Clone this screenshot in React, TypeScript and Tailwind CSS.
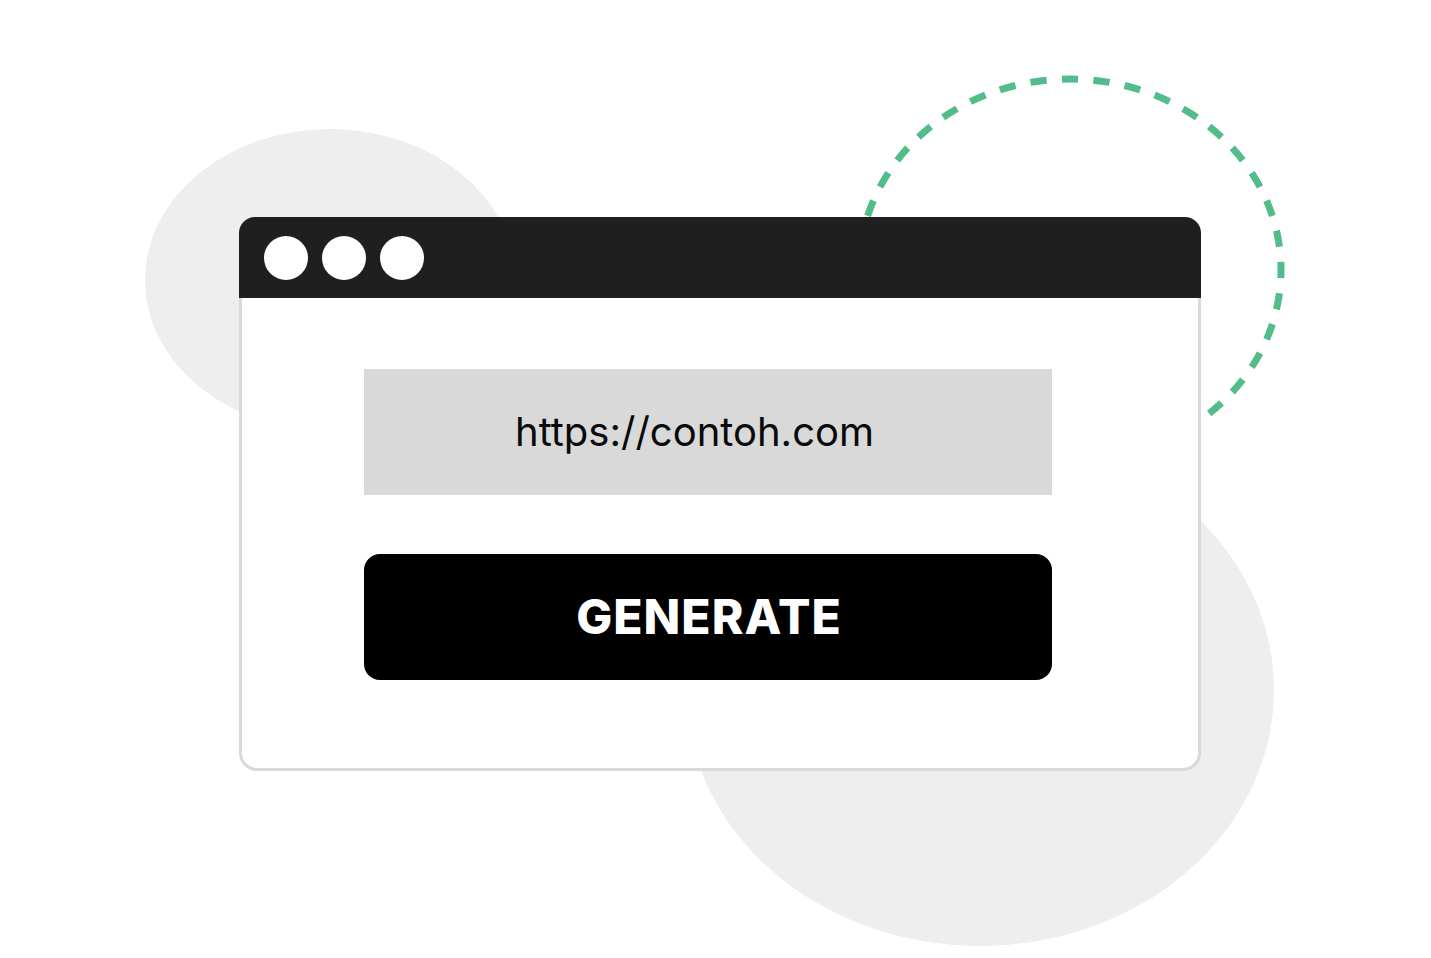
import React from "react";

function Backdrop() {
  return (
    <svg
      className="absolute inset-0 pointer-events-none"
      width="1431"
      height="958"
      viewBox="0 0 1431 958"
    >
      <ellipse cx="330" cy="280" rx="185" ry="151" fill="#efeeef" />
      <ellipse cx="980" cy="690" rx="294" ry="256" fill="#efeeef" />
      <ellipse
        cx="1070"
        cy="270"
        rx="211"
        ry="191"
        fill="none"
        stroke="#52bd8b"
        strokeWidth="7"
        pathLength={1240}
        strokeDasharray="16 15"
        strokeDashoffset="8"
      />
    </svg>
  );
}

export default function App() {
  return (
    <div
      className="relative w-[1431px] h-[958px] bg-white overflow-hidden"
      style={{ fontFamily: "Inter, 'Noto Sans', sans-serif" }}
    >
      <Backdrop />
      <div className="relative pt-[217px] pl-[239px]">
        <div className="w-[962px] flex flex-col">
          <div className="h-[81px] bg-[#1f1f1f] rounded-t-[16px] flex items-center pl-[25px] gap-[14px]">
            <span className="w-[44px] h-[44px] rounded-full bg-white" />
            <span className="w-[44px] h-[44px] rounded-full bg-white" />
            <span className="w-[44px] h-[44px] rounded-full bg-white" />
          </div>
          <div className="h-[473px] bg-white border-[3px] border-t-0 border-[#d9d9d9] rounded-b-[18px] pt-[71px] pl-[122px] flex flex-col gap-[59px]">
            <div className="w-[688px] h-[126px] bg-[#d9d9d9] flex items-center pl-[151px] text-[40px] text-[#0a0a0a] font-normal leading-none">
              https://contoh.com
            </div>
            <button className="w-[688px] h-[126px] bg-black rounded-[16px] flex items-center justify-center pl-[2px] text-white text-[48px] font-extrabold tracking-[1px] leading-none">
              GENERATE
            </button>
          </div>
        </div>
      </div>
    </div>
  );
}
